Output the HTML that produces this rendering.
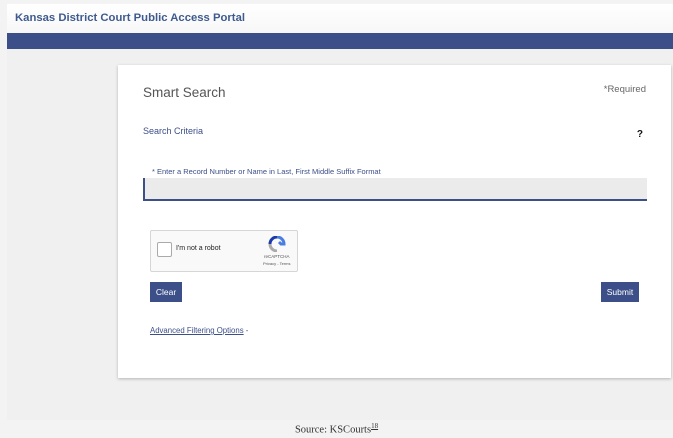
<!DOCTYPE html>
<html><head><meta charset="utf-8"><style>
body{margin:0;width:673px;height:438px;background:#f3f3f3;position:relative;overflow:hidden;font-family:"Liberation Sans",sans-serif}
.shot{position:absolute;left:7px;top:4px;width:666px;height:416px;background:#f0f0f0}
.hdr{position:absolute;left:0;top:0;width:666px;height:29px;background:linear-gradient(#fff,#f7f7f7)}
.hdr span{position:absolute;left:8px;top:8px;font-size:11.3px;font-weight:bold;color:#3e5a8e}
.bar{position:absolute;left:0;top:29px;width:666px;height:16px;background:#3d4f89}
.card{position:absolute;left:111px;top:61px;width:553px;height:313px;background:#fff;box-shadow:0 1px 3px rgba(0,0,0,.25)}
.t{position:absolute;white-space:nowrap}
.inp{position:absolute;left:25px;top:113px;width:502px;height:21px;background:#ebebeb;border-left:2px solid #3d4f89;border-bottom:2px solid #3d4f89}
.cap{position:absolute;left:32px;top:165px;width:146px;height:40px;background:#f9f9f9;border:1px solid #d6d6d6;border-radius:2px}
.btn{position:absolute;background:#3d4f89;color:#fff;font-size:8.5px;text-align:center;line-height:20px;height:20px}
.foot{position:absolute;top:422px;left:0;width:673px;text-align:center;font-family:"Liberation Serif",serif;font-size:10.5px;color:#333}
</style></head><body>
<div class="shot">
<div class="hdr"><span>Kansas District Court Public Access Portal</span></div>
<div class="bar"></div>
<div class="card">
<div class="t" style="left:25px;top:20px;font-size:13.5px;color:#555">Smart Search</div>
<div class="t" style="right:25px;top:19px;font-size:9.5px;color:#666">*Required</div>
<div class="t" style="left:25px;top:61px;font-size:9px;color:#3d4f89">Search Criteria</div>
<div class="t" style="right:28px;top:64px;font-size:10px;font-weight:bold;color:#111">?</div>
<div class="t" style="left:34px;top:102px;font-size:7.5px;color:#3d4f89">* Enter a Record Number or Name in Last, First Middle Suffix Format</div>
<div class="inp"></div>
<div class="cap">
<div style="position:absolute;left:6px;top:11px;width:13px;height:13px;border:1px solid #aaa;background:#fff;border-radius:2px"></div>
<div class="t" style="left:25px;top:14px;font-size:7px;color:#222">I'm not a robot</div>
<svg style="position:absolute;left:117px;top:5px" width="18" height="16" viewBox="0 0 18 16"><path d="M9 1a7 7 0 0 1 7 7h-3l-2-2" fill="none" stroke="#4a7de0" stroke-width="3"/><path d="M2 8a7 7 0 0 0 7 7" fill="none" stroke="#aaa" stroke-width="3"/><path d="M9 1a7 7 0 0 0-7 7" fill="none" stroke="#1c3aa9" stroke-width="3"/></svg>
<div class="t" style="left:113px;top:23px;font-size:4.5px;color:#555">reCAPTCHA</div>
<div class="t" style="left:112px;top:30px;font-size:4px;color:#555">Privacy - Terms</div>
</div>
<div class="btn" style="left:32px;top:217px;width:32px">Clear</div>
<div class="btn" style="left:483px;top:217px;width:38px">Submit</div>
<div class="t" style="left:32px;top:261px;font-size:7.8px;color:#3d4f89"><span style="text-decoration:underline">Advanced Filtering Options</span> -</div>
</div>
</div>
<div class="foot">Source: KSCourts<sup style="font-size:7px;text-decoration:underline">18</sup></div>
</body></html>
